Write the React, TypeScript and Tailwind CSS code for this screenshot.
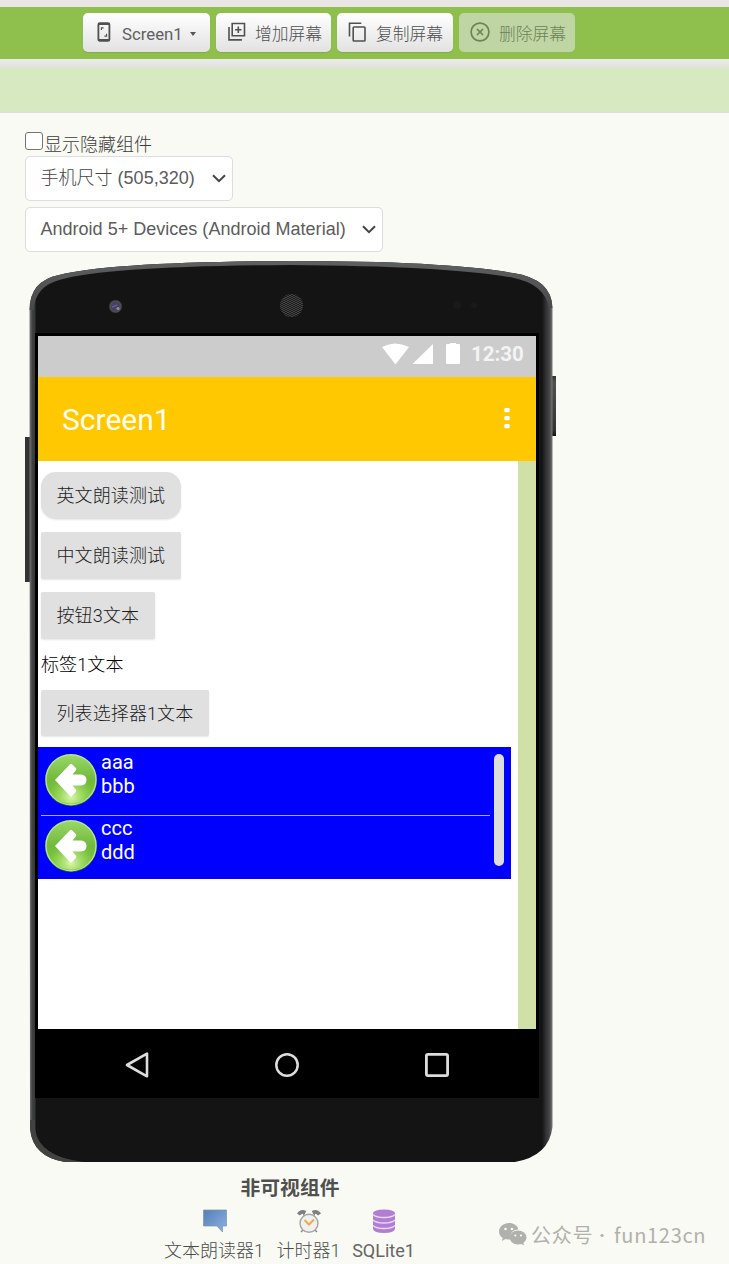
import React from "react";

const cjk = "font-['Roboto','Noto_Sans_CJK_SC',sans-serif]";

function ToolButton({ className, icon, children, disabled }: { className: string; icon: React.ReactNode; children: React.ReactNode; disabled?: boolean }) {
  return (
    <button
      disabled={disabled}
      className={`flex h-[39px] items-center whitespace-nowrap rounded-[5px] text-[17px] leading-[39px] ${
        disabled ? "bg-[#bfd5a4] text-[#6d8255]" : "bg-gradient-to-b from-white to-[#e2e2e2] text-[#505050] shadow-[0_1px_1px_rgba(0,0,0,0.1)]"
      } ${className}`}
    >
      {icon}
      {children}
    </button>
  );
}

const line = { fill: "none", stroke: "currentColor", strokeWidth: 1.8 } as const;

function PhoneIcon() {
  return (
    <svg viewBox="0 0 14 20" className="h-5 w-[14px]" {...line}>
      <rect x="1.4" y="1.2" width="11" height="17.6" rx="1.4" />
      <path d="M1.4 2h11M1.4 18h11" strokeWidth="2" />
      <path d="M4.4 8V5.9h2.2M9.6 11.8v2.3H7.400" strokeWidth="1.1" />
    </svg>
  );
}

function AddIcon() {
  return (
    <svg viewBox="0 0 20 20" className="h-5 w-5" {...line} strokeWidth={1.6}>
      <path d="M5.2 1.500h12.300v12.300H5.200zM2 5v12.900h12.900M11.300 4.500v6.400M8.100 7.700h6.400" />
    </svg>
  );
}

function CopyIcon() {
  return (
    <svg viewBox="0 0 18 20" className="h-5 w-[18px]" {...line} strokeWidth={1.6}>
      <path d="M1.500 14.500V1.300h11.800" />
      <rect x="5.2" y="5" width="11.800" height="14" rx="0.8" />
    </svg>
  );
}

function DeleteIcon() {
  return (
    <svg viewBox="0 0 20 20" className="h-5 w-5" {...line} strokeWidth={1.7}>
      <circle cx="10" cy="10" r="8.9" />
      <path d="M7 7l6 6M13 7l-6 6" />
    </svg>
  );
}

function SelectBox({ className, children }: { className: string; children: React.ReactNode }) {
  return (
    <div className={`flex h-[45px] items-center justify-between whitespace-nowrap rounded-[5px] border border-[#ddd] bg-white pl-[14.5px] pr-[6px] font-['Liberation_Sans','Noto_Sans_CJK_SC',sans-serif] text-[18px] text-[#5c5c5c] ${className}`}>
      <span className="-mt-px tracking-[0.015px]">{children}</span>
      <svg viewBox="0 0 14 9" className="h-[9px] w-[14px]" fill="none" stroke="#444" strokeWidth="2">
        <path d="M1 1.2l6 6 6-6" />
      </svg>
    </div>
  );
}

function DeviceFrame() {
  return (
    <svg viewBox="25 261 531 901" className="absolute inset-0 h-full w-full">
      <defs>
        <linearGradient id="side" x1="0" x2="1" y1="0" y2="0">
          <stop offset="0" stopColor="#7a7c7a" />
          <stop offset="0.005" stopColor="#414343" />
          <stop offset="0.01" stopColor="#373838" />
          <stop offset="0.013" stopColor="#141414" />
          <stop offset="0.98" stopColor="#141414" />
          <stop offset="0.988" stopColor="#343436" />
          <stop offset="0.994" stopColor="#444446" />
          <stop offset="1" stopColor="#777" />
        </linearGradient>
        <linearGradient id="top" x1="0" x2="0" y1="0" y2="1">
          <stop offset="0" stopColor="#5d605e" />
          <stop offset="1" stopColor="#484a49" />
        </linearGradient>
        <linearGradient id="key" x1="0" x2="0" y1="0" y2="1">
          <stop offset="0" stopColor="#333" />
          <stop offset="0.1" stopColor="#505050" />
          <stop offset="0.9" stopColor="#333" />
          <stop offset="1" stopColor="#111" />
        </linearGradient>
        <radialGradient id="lens">
          <stop offset="0" stopColor="#413b79" />
          <stop offset="0.5" stopColor="#454353" />
          <stop offset="0.8" stopColor="#4d4d51" />
          <stop offset="1" stopColor="#151515" />
        </radialGradient>
        <pattern id="mesh" width="4" height="4" patternUnits="userSpaceOnUse">
          <path d="M0 0l2 2 2-2M0 2l2 2 2-2" fill="none" stroke="#484848" strokeWidth="0.9" />
        </pattern>
      </defs>
      <rect x="25" y="437" width="6" height="145" fill="#333" />
      <rect x="550" y="376" width="6" height="60" fill="url(#key)" />
      <path d="M29.5 310Q29.5 281 59 275Q110 262 291 261Q445 261 513 273Q552 279 552.5 308V1127Q549 1156 515 1162H65Q33 1157 30 1129Z" fill="url(#side)" />
      <path d="M29.5 310Q29.5 281 59 275Q110 262 291 261Q445 261 513 273Q552 279 552.5 308L549 308Q545 284 512 277.500Q445 266 291 265Q110 266 61 279.500Q35 286 33.500 310Z" fill="url(#top)" />
      <path d="M30 1120V1129Q33 1157 65 1162H84Q39 1157 35 1129V1120Z" fill="#414341" />
      <circle cx="115.500" cy="306.500" r="7" fill="url(#lens)" />
      <path d="M112 307l5-2" stroke="#6059a4" strokeWidth="1.4" />
      <circle cx="118" cy="308.500" r="1.6" fill="#918f98" />
      <circle cx="291.500" cy="305.500" r="11.500" fill="#1c1c1c" />
      <circle cx="291.500" cy="305.500" r="11.500" fill="url(#mesh)" />
      <circle cx="457" cy="305" r="4" fill="#1a1a1a" />
      <circle cx="474" cy="305" r="3" fill="#1a1a1a" />
    </svg>
  );
}

function AppButton({ className, children }: { className: string; children: React.ReactNode }) {
  return (
    <button className={`flex shrink-0 items-center whitespace-nowrap bg-[#e0e0e0] pl-[15.5px] text-[18px] tracking-[0.1px] text-[#1c1c1c] shadow-[0_1px_2px_rgba(0,0,0,0.1)] ${className}`}>
      <span>{children}</span>
    </button>
  );
}

function ArrowBall() {
  return (
    <svg viewBox="0 0 54 54" className="h-[54px] w-[54px]">
      <defs>
        <linearGradient id="ball" x1="0" x2="0" y1="0" y2="1">
          <stop offset="0" stopColor="#9ad76a" />
          <stop offset="0.5" stopColor="#72b93c" />
          <stop offset="1" stopColor="#80cc3c" />
        </linearGradient>
        <radialGradient id="glow" cx="0.5" cy="0.85" r="0.45">
          <stop offset="0" stopColor="#ecffc3" stopOpacity="0.85" />
          <stop offset="1" stopColor="#b3ea72" stopOpacity="0" />
        </radialGradient>
      </defs>
      <circle cx="27" cy="27" r="26" fill="#2d703b" />
      <circle cx="27" cy="26.700" r="25" fill="url(#ball)" stroke="#b6e48c" strokeWidth="1.400" />
      <circle cx="27" cy="26.700" r="24" fill="url(#glow)" />
      <path d="M11 27L26 11.300Q27 10.300 28 11.300L32 15.300Q32.700 16.300 32 17.300L28.500 21.500H37Q42.500 22 42.500 27T37 32.500H28.500L32 36.700Q32.700 37.700 32 38.700L28 43Q27 44 26 43Z" fill="#fff" />
    </svg>
  );
}

function ListRow({ title, detail, divided }: { title: string; detail: string; divided?: boolean }) {
  return (
    <div className={`ml-[3px] flex h-[66px] w-[449px] pl-[3px] text-[20px] leading-6 text-white ${divided ? "border-t border-[#aaaaf5]" : ""}`}>
      <div className={divided ? "pt-[3px]" : "pt-[4px]"}>
        <ArrowBall />
      </div>
      <div className={divided ? "pl-[3px]" : "pl-[3px] pt-px"}>
        <div>{title}</div>
        <div>{detail}</div>
      </div>
    </div>
  );
}

function Phone() {
  return (
    <div className="relative mt-[9px] h-[901px] w-[531px] pl-[10px] pt-[72px]">
      <DeviceFrame />
      <div className="relative flex h-[765px] w-[504px] flex-col bg-black pl-[3px] pr-[3px] pt-[3px]">
        <div className="flex h-[41px] items-center justify-end bg-[#ccc] pb-[5px] pr-[12px]">
          <svg viewBox="0 0 80 24" className="h-6 w-20" fill="#fff">
            <path d="M0 5Q13-2 27 5L13.500 22.500ZM30.500 22L51 2V22Z" />
            <path d="M65 2h3V1h6v1h3q1 0 1 1V21q0 1-1 1H65q-1 0-1-1V3q0-1 1-1Z" />
          </svg>
          <span className="ml-[9px] w-[53px] whitespace-nowrap text-[20.5px] font-bold leading-5 text-[#f4f4f4]">12:30</span>
        </div>
        <div className="flex h-[84px] items-center justify-between bg-[#ffc800] pl-6 pr-[26px]">
          <span className="text-[30px] text-[#fffef0]">Screen1</span>
          <svg viewBox="0 0 6 22" className="mt-[-2px] h-[22px] w-[6px]" fill="#fff">
            <rect x="0.300" y="1" width="5.400" height="4.300" rx="1.200" />
            <rect x="0.300" y="9" width="5.400" height="4.300" rx="1.200" />
            <rect x="0.300" y="17" width="5.400" height="4.300" rx="1.200" />
          </svg>
        </div>
        <div className="flex h-[568px] bg-[#d0e0a6]">
          <div className="flex w-[480px] flex-col items-start bg-white pt-[11px] font-light">
            <AppButton className="ml-[3px] h-[47px] w-[140px] rounded-[15px]">英文朗读测试</AppButton>
            <AppButton className="ml-[3px] mt-[13px] h-[47px] w-[140px] rounded-[2px]">中文朗读测试</AppButton>
            <AppButton className="ml-[3px] mt-[13px] h-[47px] w-[114px] rounded-[2px]">按钮3文本</AppButton>
            <span className="ml-[3px] mt-[13px] h-[25px] text-[18px] leading-[25px] tracking-[0.1px] text-black">标签1文本</span>
            <AppButton className="ml-[3px] mt-[13px] h-[46px] w-[168px] rounded-[2px]">列表选择器1文本</AppButton>
            <div className="mt-[11px] flex h-[132px] w-[473px] justify-between bg-[#0000ff] font-normal">
              <div className="pt-[2px]">
                <ListRow title="aaa" detail="bbb" />
                <ListRow title="ccc" detail="ddd" divided />
              </div>
              <div className="mr-[7px] mt-[7px] h-[112px] w-[10px] rounded-full bg-[#ddd]" />
            </div>
          </div>
        </div>
        <div className="flex h-[69px] items-center justify-between pl-[86px] pr-[86px] pt-[3px]">
          <svg viewBox="0 0 26 28" className="h-7 w-[26px]" fill="none" stroke="#ddd" strokeWidth="2.600">
            <path d="M3 14L23 2.700V25.300Z" strokeLinejoin="round" />
          </svg>
          <svg viewBox="0 0 26 26" className="h-[26px] w-[26px]" fill="none" stroke="#ddd" strokeWidth="2.500">
            <circle cx="13" cy="13" r="10.700" />
          </svg>
          <svg viewBox="0 0 26 26" className="h-[26px] w-[26px]" fill="none" stroke="#ddd" strokeWidth="2.800">
            <rect x="2.400" y="2.400" width="21.200" height="21.200" rx="1.500" />
          </svg>
        </div>
      </div>
    </div>
  );
}

function SpeechIcon() {
  return (
    <svg viewBox="0 0 24 24" className="ml-[2px] h-6 w-6">
      <defs>
        <linearGradient id="speech" x1="0" x2="1" y1="0" y2="1">
          <stop offset="0" stopColor="#567fb9" />
          <stop offset="1" stopColor="#8db2e3" />
        </linearGradient>
      </defs>
      <path d="M0.500 1H23.500V17H19.500V23L14 17H0.500Z" fill="url(#speech)" stroke="#7892ae" strokeWidth="0.700" />
    </svg>
  );
}

function ClockIcon() {
  return (
    <svg viewBox="0 0 24 24" className="h-6 w-6">
      <path d="M1.500 5.500Q4 1.500 8.500 3.500M22.500 5.500Q20 1.500 15.500 3.500" fill="none" stroke="#7c8080" strokeWidth="3.500" />
      <path d="M6 4l2 4M18 4l-2 4M6 21l-2 2M18 21l2 2" stroke="#888" strokeWidth="1.500" />
      <circle cx="12" cy="14.300" r="9" fill="#f0f0f0" stroke="#a5a5a5" strokeWidth="1.400" />
      <path d="M7.500 11l4.500 4.500 5-5" fill="none" stroke="#eeaa44" strokeWidth="2" />
    </svg>
  );
}

function DatabaseIcon() {
  return (
    <svg viewBox="0 0 24 24" className="h-6 w-6">
      <path d="M1 4Q2 0.500 12 0.500T23 4V20Q22 24 12 24T1 20Z" fill="#b27ed3" />
      <path d="M1 5.500Q4 8.500 12 8.500T23 5.500M1 11Q4 14 12 14T23 11M1 16.500Q4 19.500 12 19.500T23 16.500" fill="none" stroke="#ead7f2" strokeWidth="1.300" />
    </svg>
  );
}

function Component({ className, icon, name }: { className: string; icon: React.ReactNode; name: string }) {
  return (
    <div className={`flex flex-col items-center whitespace-nowrap text-[18px] leading-6 ${className}`}>
      {icon}
      <span className="mt-[5.5px]">{name}</span>
    </div>
  );
}

export default function App() {
  return (
    <div className={`relative h-[1264px] w-[729px] overflow-hidden bg-[#f9faf3] ${cjk}`}>
      <div className="h-[7px] bg-[#eae6e5]" />
      <div className="flex h-[52px] gap-[6px] bg-[#8fc04e] pl-[83px] pt-[6px]">
        <ToolButton className="w-[127px] pl-[14px]" icon={<span className="-mt-[2px] mr-[11px]"><PhoneIcon /></span>}>
          <span className="mt-[3px] text-[16.8px] text-[#606060]">Screen1</span>
          <span className="ml-[7.5px] mt-[3px] border-x-[3.5px] border-t-4 border-x-transparent border-t-[#555]" />
        </ToolButton>
        <ToolButton className="w-[115px] pl-[11px] font-light" icon={<span className="-mt-[2px] mr-[8px]"><AddIcon /></span>}>
          <span className="mt-[4px] text-[16.8px]">增加屏幕</span>
        </ToolButton>
        <ToolButton className="w-[116px] pl-[11px] font-light" icon={<span className="-mt-[2px] mr-[10px]"><CopyIcon /></span>}>
          <span className="mt-[4px] text-[16.8px]">复制屏幕</span>
        </ToolButton>
        <ToolButton disabled className="w-[116px] pl-[11px] font-light" icon={<span className="-mt-[2px] mr-[9px]"><DeleteIcon /></span>}>
          <span className="mt-[4px] text-[16.8px]">删除屏幕</span>
        </ToolButton>
      </div>
      <div className="h-[9px] bg-gradient-to-b from-[#ecebe7] to-[#dfe2dc]" />
      <div className="h-[45px] border-b border-[#dcdfd5] bg-[#d6e9c1]" />

      <div className="pl-[25px] pt-[19px]">
        <label className="flex h-6 text-[18px] font-light leading-[26px] text-[#3c3c3c]">
          <span className="mr-px h-[18px] w-[18px] rounded-[3px] border-[1.5px] border-[#757575] bg-white" />
          显示隐藏组件
        </label>
        <SelectBox className="w-[208px]"><span className="font-light text-[#444]">手机尺寸</span> (505,320)</SelectBox>
        <SelectBox className="mt-[6px] w-[358px]">Android 5+ Devices (Android Material)</SelectBox>
        <Phone />
      </div>

      <div className="ml-[164px] flex w-[250px] flex-col pt-[11px]">
        <div className="h-[30px] pl-[2px] text-center text-[19.8px] font-bold leading-[31px] text-[#505050]">非可视组件</div>
        <div className="mt-[6px] flex gap-[13px]">
          <Component className="w-[100px] font-light text-[#4c4c4c]" icon={<SpeechIcon />} name="文本朗读器1" />
          <Component className="w-[63px] font-light text-[#4c4c4c]" icon={<ClockIcon />} name="计时器1" />
          <Component className="w-[61px] text-[17.8px] text-[#666]" icon={<DatabaseIcon />} name="SQLite1" />
        </div>
      </div>

      <div className="absolute left-[499px] top-[1219px] flex h-[30px] items-center whitespace-nowrap font-['Noto_Sans_CJK_SC',sans-serif] text-[20px] leading-[30px] text-[#b0b1ac]">
        <svg viewBox="0 0 28 24" className="mr-[5px] h-6 w-7" fill="#b0b1ac">
          <path d="M10 1C4.500 1 0 4.700 0 9.500c0 2.700 1.500 5 3.700 6.500L3 19l3.500-2c2 .6 3.500.6 5 .5-1.500-6 3-10.200 8-9.900C18.500 3.500 14.600 1 10 1Z" />
          <path d="M19 8.600c-4.700 0-8.200 3-8.200 6.900s3.500 7 8.200 7c1.200 0 2.200-.2 3.200-.5L25 23.500l-.7-2.600c2-1.300 3.200-3.200 3.200-5.400 0-3.900-4-6.900-8.500-6.900Z" />
          <g fill="#f9faf3"><circle cx="6.500" cy="7" r="1.300" /><circle cx="13" cy="7" r="1.300" /><circle cx="16.300" cy="13.500" r="1.100" /><circle cx="22" cy="13.500" r="1.100" /></g>
        </svg>
        <span className="-ml-px flex pt-px tracking-[0.7px]">
          公众号<span className="w-[21px] pl-[6px] font-['Roboto',sans-serif] font-bold">·</span>fun123cn
        </span>
      </div>
    </div>
  );
}
